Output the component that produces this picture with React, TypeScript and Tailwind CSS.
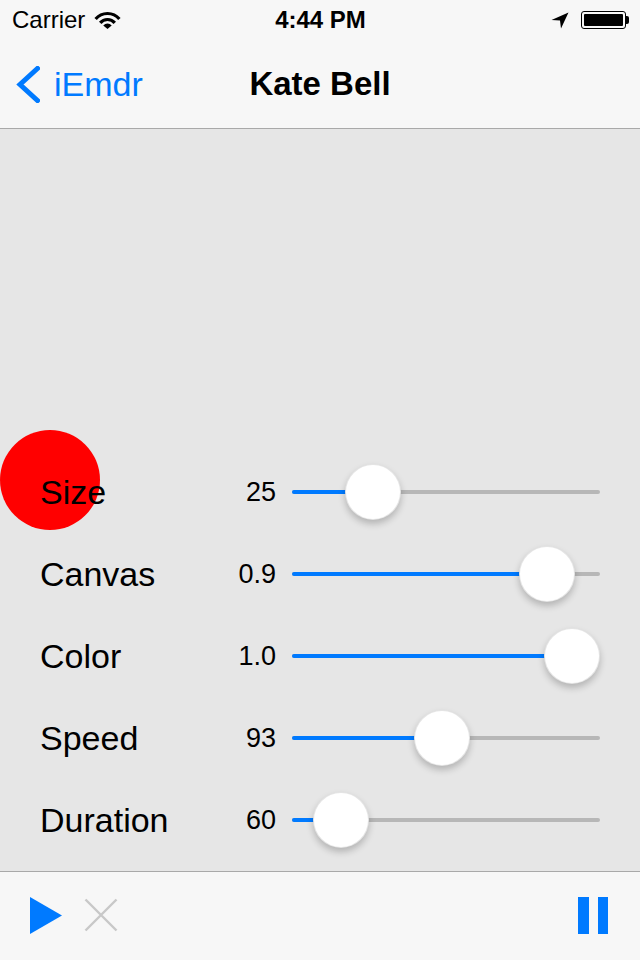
import React from "react";

const rows = [
  { label: "Size", value: "25", v: 0.21 },
  { label: "Canvas", value: "0.9", v: 0.9 },
  { label: "Color", value: "1.0", v: 1.0 },
  { label: "Speed", value: "93", v: 0.484 },
  { label: "Duration", value: "60", v: 0.083 },
];

function Slider({ v }: { v: number }) {
  const center = 28 + v * 252;
  return (
    <div className="relative h-[56px] w-[308px]">
      <div className="absolute left-0 right-0 top-[26px] h-[4px] rounded-full bg-[#b7b7b7]" />
      <div
        className="absolute left-0 top-[26px] h-[4px] rounded-full bg-[#007aff]"
        style={{ width: center }}
      />
      <div
        className="absolute top-0 h-[56px] w-[56px] rounded-full bg-white border border-black/10 shadow-[0_4px_7px_rgba(0,0,0,0.22)]"
        style={{ left: center - 28 }}
      />
    </div>
  );
}

export default function App() {
  return (
    <div
      className="w-[640px] h-[960px] flex flex-col bg-[#f7f7f7] text-black overflow-hidden"
      style={{ fontFamily: '"Liberation Sans", Arial, sans-serif' }}
    >
      {/* Status bar */}
      <div className="h-[40px] grid grid-cols-3 items-center pl-[12px] pr-[11px] text-[24px]">
        <div className="flex items-center gap-[9px]">
          <span>Carrier</span>
          <svg width="27" height="18" viewBox="0 0 27 18">
            <path d="M1.63 8.04 A15.5 15.5 0 0 1 25.37 8.04" stroke="#000" strokeWidth="3.2" fill="none" />
            <path d="M6.22 11.9 A9.5 9.5 0 0 1 20.78 11.9" stroke="#000" strokeWidth="3.2" fill="none" />
            <path d="M13.5 18 L9.29 14.46 A5.5 5.5 0 0 1 17.71 14.46 Z" fill="#000" />
          </svg>
        </div>
        <div className="text-center font-bold">4:44 PM</div>
        <div className="flex items-center justify-end gap-[12px]">
          <svg width="18" height="17" viewBox="0 0 18 17">
            <path d="M17.5 0.5 L0.5 8 L9 8.5 L10 16.5 Z" fill="#000" />
          </svg>
          <div className="flex items-center">
            <div className="w-[45px] h-[18px] rounded-[3px] border-[1.5px] border-black p-[2px]">
              <div className="w-full h-full bg-black rounded-[1px]" />
            </div>
            <div className="w-[3px] h-[8px] bg-black rounded-r-[2px]" />
          </div>
        </div>
      </div>

      {/* Nav bar */}
      <div className="h-[89px] grid grid-cols-[1fr_auto_1fr] items-center border-b border-[#a9a9a9]">
        <div className="flex items-center pl-[16px] gap-[14px] text-[#007aff] text-[34px]">
          <svg width="24" height="37" viewBox="0 0 24 37">
            <path d="M21.5 2.5 L4 18.5 L21.5 34.5" stroke="#007aff" strokeWidth="5" fill="none" strokeLinecap="square" />
          </svg>
          <span>iEmdr</span>
        </div>
        <div className="text-[33px] font-bold">Kate Bell</div>
        <div />
      </div>

      {/* Content */}
      <div className="relative h-[742px] bg-[#e6e6e6] flex flex-col justify-end pb-[10px]">
        <div className="absolute left-0 top-[301px] w-[100px] h-[100px] rounded-full bg-[#ff0000]" />
        {rows.map((r) => (
          <div key={r.label} className="relative h-[82px] flex items-center pl-[40px]">
            <div className="w-[196px] text-[34px] leading-none">{r.label}</div>
            <div className="w-[40px] text-right text-[27px] leading-none">{r.value}</div>
            <div className="ml-[16px]">
              <Slider v={r.v} />
            </div>
          </div>
        ))}
      </div>

      {/* Toolbar */}
      <div className="flex-1 border-t border-[#a9a9a9] flex items-center justify-between pl-[30px] pr-[32px] pb-[2px]">
        <div className="flex items-center gap-[22px]">
          <svg width="32" height="37" viewBox="0 0 32 37">
            <path d="M0 0 L32 18.5 L0 37 Z" fill="#007aff" />
          </svg>
          <svg width="34" height="34" viewBox="0 0 34 34">
            <path d="M1.5 1.5 L32.5 32.5 M32.5 1.5 L1.5 32.5" stroke="#c8c8c8" strokeWidth="2.4" />
          </svg>
        </div>
        <div className="flex items-center gap-[9px]">
          <div className="w-[11px] h-[37px] bg-[#007aff]" />
          <div className="w-[10px] h-[37px] bg-[#007aff]" />
        </div>
      </div>
    </div>
  );
}
